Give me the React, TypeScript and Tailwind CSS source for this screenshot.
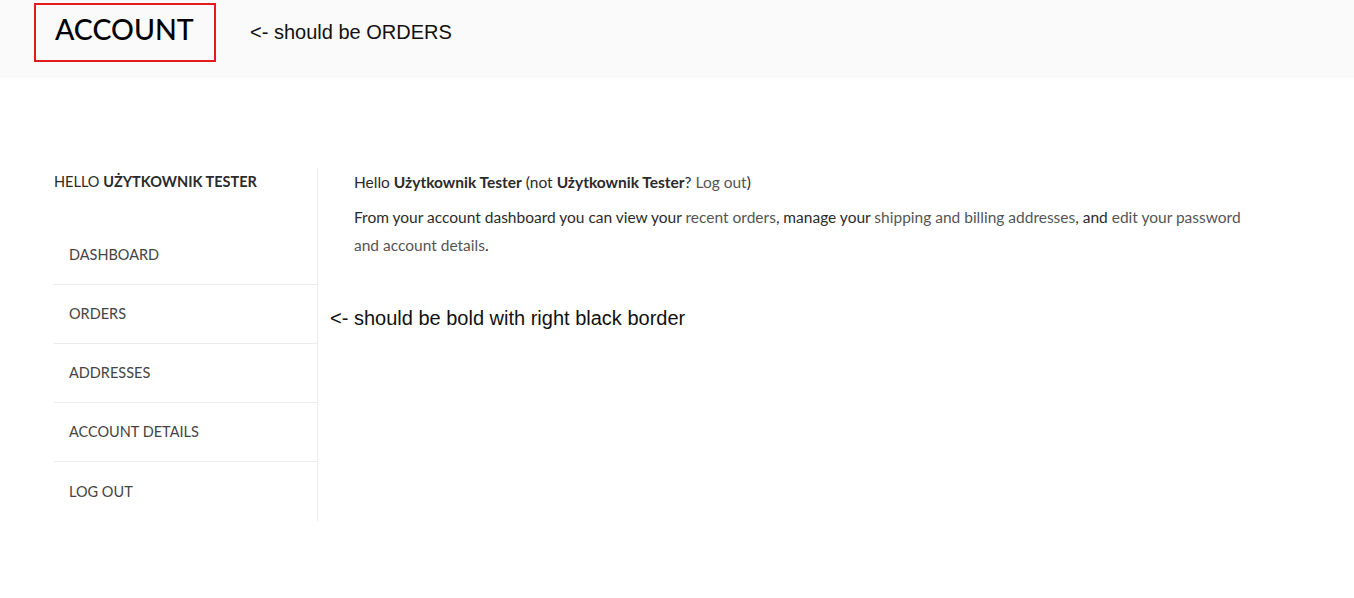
import React from "react";

const font = { fontFamily: "Lato, 'Noto Sans', sans-serif" };

export default function App() {
  const items = ["DASHBOARD", "ORDERS", "ADDRESSES", "ACCOUNT DETAILS", "LOG OUT"];
  return (
    <div className="w-[1354px] h-[598px] bg-white text-[#2b2b2b]" style={font}>
      <div className="h-[78px] bg-[#fafafa] flex items-start">
        <div className="ml-[34px] mt-[3px] w-[182px] h-[59px] border-2 border-[#e31b1b] flex items-center pl-[19px] pb-[6px]">
          <span className="text-[28.5px] font-medium text-black leading-none">ACCOUNT</span>
        </div>
        <div
          className="ml-[34px] mt-[17px] text-[20px] text-[#111]"
          style={{ fontFamily: "'Liberation Sans', Arial, sans-serif" }}
        >
          &lt;- should be ORDERS
        </div>
      </div>
      <div className="flex pl-[54px] pt-[90px]">
        <div className="w-[264px] border-r border-[#ececec] shrink-0">
          <div className="text-[14.5px] leading-[28px] text-[#2b2b2b]">
            HELLO <span className="font-bold">UŻYTKOWNIK TESTER</span>
          </div>
          <div className="mt-[30px]">
            {items.map((it, i) => (
              <div
                key={it}
                className={
                  "h-[59px] flex items-center pl-[15px] text-[14.5px] text-[#444] " +
                  (i < items.length - 1 ? "border-b border-[#ececec]" : "")
                }
              >
                {it}
              </div>
            ))}
          </div>
        </div>
        <div className="pl-[36px] w-[936px]">
          <p className="text-[15.5px] leading-[28px] text-[#2b2b2b]">
            Hello <span className="font-bold">Użytkownik Tester</span> (not{" "}
            <span className="font-bold">Użytkownik Tester</span>? <span className="text-[#555]">Log out</span>)
          </p>
          <p className="text-[15.5px] leading-[28px] mt-[7px] text-[#2b2b2b]">
            From your account dashboard you can view your <span className="text-[#555]">recent orders</span>, manage
            your <span className="text-[#555]">shipping and billing addresses</span>, and{" "}
            <span className="text-[#555]">edit your password and account details</span>.
          </p>
          <div
            className="mt-[44px] -ml-[24px] text-[20px] text-[#111]"
            style={{ fontFamily: "'Liberation Sans', Arial, sans-serif" }}
          >
            &lt;- should be bold with right black border
          </div>
        </div>
      </div>
    </div>
  );
}
